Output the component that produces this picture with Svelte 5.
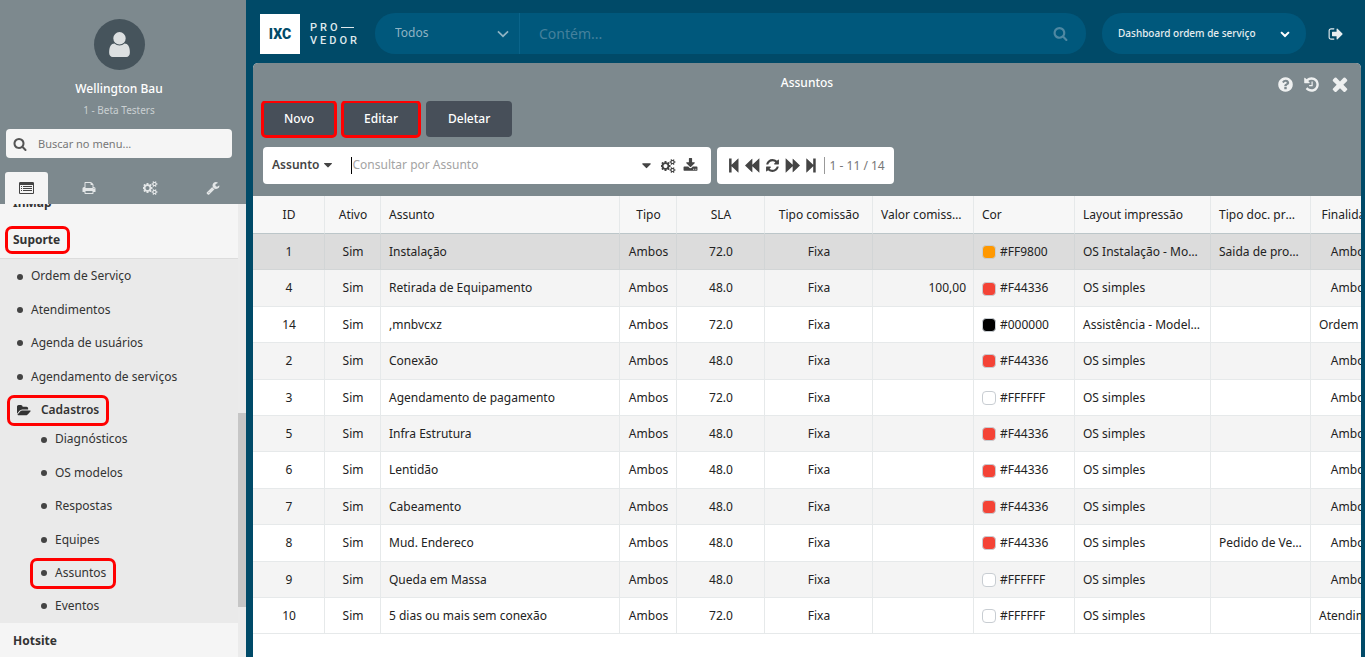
<script lang="ts">
  type Row = {
    id: number;
    assunto: string;
    sla: string;
    valor?: string;
    cor: string;
    layout: string;
    doc?: string;
    finalidade: string;
  };

  const icons: Record<string, { d: string; w?: number }> = {
    search: {
      d: 'M1216 832q0-185-131.5-316.5t-316.5-131.5-316.5 131.5-131.5 316.5 131.5 316.5 316.5 131.5 316.5-131.5 131.5-316.5zm512 832q0 52-38 90t-90 38q-54 0-90-38l-343-342q-179 124-399 124-143 0-273.5-55.5t-225-150-150-225-55.5-273.5 55.5-273.5 150-225 225-150 273.5-55.5 273.5 55.5 225 150 150 225 55.5 273.5q0 220-124 399l343 343q37 37 37 90z'
    },
    user: {
      d: 'M1536 1399q0 109-62.5 187t-150.5 78h-854q-88 0-150.5-78t-62.5-187q0-85 8.5-160.5t31.5-152 58.5-131 94-89 134.5-34.5q131 128 313 128t313-128q76 0 134.5 34.5t94 89 58.5 131 31.5 152 8.5 160.5zm-256-887q0 159-112.5 271.5t-271.5 112.5-271.5-112.5-112.5-271.5 112.5-271.5 271.5-112.5 271.5 112.5 112.5 271.5z'
    },
    list: {
      d: 'M160 128h1600q66 0 113 47t47 113v1216q0 66-47 113t-113 47h-1600q-66 0-113-47t-47-113v-1216q0-66 47-113t113-47zm-32 384v992q0 32 32 32h1600q32 0 32-32v-992zm128 128h128v128h-128zm256 0h1152v128h-1152zm-256 256h128v128h-128zm256 0h1152v128h-1152zm-256 256h128v128h-128zm256 0h1152v128h-1152z',
      w: 1920
    },
    print: {
      d: 'M448 1536h896v-256h-896v256zm0-640h896v-384h-160q-40 0-68-28t-28-68v-160h-640v640zm1152 64q0-26-19-45t-45-19-45 19-19 45 19 45 45 19 45-19 19-45zm128 0v416q0 13-9.5 22.5t-22.5 9.5h-224v160q0 40-28 68t-68 28h-960q-40 0-68-28t-28-68v-160h-224q-13 0-22.5-9.5t-9.5-22.5v-416q0-79 56.5-135.5t135.5-56.5h64v-544q0-40 28-68t68-28h672q40 0 88 20t76 48l152 152q28 28 48 76t20 88v256h64q79 0 135.5 56.5t56.5 135.5z'
    },
    cogs: {
      d: 'M832 896q0-106-75-181t-181-75-181 75-75 181 75 181 181 75 181-75 75-181zm768 512q0-52-38-90t-90-38-90 38-38 90q0 53 37.5 90.5t90.5 37.5 90.5-37.5 37.5-90.5zm0-1024q0-52-38-90t-90-38-90 38-38 90q0 53 37.5 90.5t90.5 37.5 90.5-37.5 37.5-90.5zm-384 421v185q0 10-7 19.5t-16 10.5l-155 24q-11 35-32 76 34 48 90 115 7 11 7 20 0 12-7 19-23 30-82.5 89.5t-78.5 59.5q-11 0-21-7l-115-90q-37 19-77 31-11 108-23 155-7 24-30 24h-186q-11 0-20-7.5t-10-17.5l-23-153q-34-10-75-31l-118 89q-7 7-20 7-11 0-21-8-144-133-144-160 0-9 7-19 10-14 41-53t47-61q-23-44-35-82l-152-24q-10-1-17-9.5t-7-19.5v-185q0-10 7-19.5t16-10.5l155-24q11-35 32-76-34-48-90-115-7-11-7-20 0-12 7-20 22-30 82-89t79-59q11 0 21 7l115 90q34-18 77-32 11-108 23-154 7-24 30-24h186q11 0 20 7.5t10 17.5l23 153q34 10 75 31l118-89q8-7 20-7 11 0 21 8 144 133 144 160 0 8-7 19-12 16-42 54t-45 60q23 48 34 82l152 23q10 2 17 10.5t7 19.5zm640 533v140q0 16-149 31-12 27-30 52 51 113 51 138 0 4-4 7-122 71-124 71-8 0-46-47t-52-68q-20 2-30 2t-30-2q-14 21-52 68t-46 47q-2 0-124-71-4-3-4-7 0-25 51-138-18-25-30-52-149-15-149-31v-140q0-16 149-31 13-29 30-52-51-113-51-138 0-4 4-7 4-2 35-20t59-34 30-16q8 0 46 46.5t52 67.5q20-2 30-2t30 2q51-71 92-112l6-2q4 0 124 70 4 3 4 7 0 25-51 138 17 23 30 52 149 15 149 31zm0-1024v140q0 16-149 31-12 27-30 52 51 113 51 138 0 4-4 7-122 71-124 71-8 0-46-47t-52-68q-20 2-30 2t-30-2q-14 21-52 68t-46 47q-2 0-124-71-4-3-4-7 0-25 51-138-18-25-30-52-149-15-149-31v-140q0-16 149-31 13-29 30-52-51-113-51-138 0-4 4-7 4-2 35-20t59-34 30-16q8 0 46 46.5t52 67.5q20-2 30-2t30 2q51-71 92-112l6-2q4 0 124 70 4 3 4 7 0 25-51 138 17 23 30 52 149 15 149 31z',
      w: 1920
    },
    wrench: {
      d: 'M448 1472q0-26-19-45t-45-19-45 19-19 45 19 45 45 19 45-19 19-45zm644-420l-682 682q-37 37-90 37-52 0-91-37l-106-108q-38-36-38-90 0-53 38-91l681-681q39 98 114.5 173.5t173.5 114.5zm634-435q0 39-23 106-47 134-164.5 217.5t-258.5 83.5q-185 0-316.5-131.5t-131.5-316.5 131.5-316.5 316.5-131.5q58 0 121.5 16.5t107.5 46.5q16 11 16 28t-16 28l-293 169v224l193 107q5-3 79-48.5t135.5-81 70.5-35.5q15 0 23.5 10t8.5 25z'
    },
    folder: {
      d: 'M1879 952q0 31-31 66l-336 396q-43 51-120.5 86.5t-143.5 35.5h-1088q-34 0-60.5-13t-26.5-43q0-31 31-66l336-396q43-51 120.5-86.5t143.5-35.5h1088q34 0 60.5 13t26.5 43zm-343-344v160h-832q-94 0-197 47.5t-164 119.5l-337 396-5 6q0-4-.5-12.5t-.5-12.5v-960q0-92 66-158t158-66h320q92 0 158 66t66 158v32h544q92 0 158 66t66 158z',
      w: 1920
    },
    signOut: {
      d: 'M704 1440q0 4 1 20t.5 26.5-3 23.5-10 19.5-20.5 6.5h-320q-119 0-203.5-84.5t-84.5-203.5v-704q0-119 84.5-203.5t203.5-84.5h320q13 0 22.5 9.5t9.5 22.5q0 4 1 20t.5 26.5-3 23.5-10 19.5-20.5 6.5h-320q-66 0-113 47t-47 113v704q0 66 47 113t113 47h312l11.5 1 11.5 3 8 5.5 7 9 2 13.5zm928-544q0 26-19 45l-544 544q-19 19-45 19t-45-19-19-45v-288h-448q-26 0-45-19t-19-45v-384q0-26 19-45t45-19h448v-288q0-26 19-45t45-19 45 19l544 544q19 19 19 45z'
    },
    help: {
      d: 'M1024 1376v-192q0-14-9-23t-23-9h-192q-14 0-23 9t-9 23v192q0 14 9 23t23 9h192q14 0 23-9t9-23zm256-672q0-88-55.5-163t-138.5-116-170-41q-243 0-371 213-15 24 8 42l132 100q7 6 19 6 16 0 25-12 53-68 86-92 34-24 86-24 48 0 85.5 26t37.5 59q0 38-20 61t-68 45q-63 28-115.5 86.5t-52.5 125.5v36q0 14 9 23t23 9h192q14 0 23-9t9-23q0-19 21.5-49.5t54.5-49.5q32-18 49-28.5t46-35 44.5-48 28-60.5 12.5-81zm384 192q0 209-103 385.5t-279.5 279.5-385.5 103-385.5-103-279.5-279.5-103-385.5 103-385.5 279.5-279.5 385.5-103 385.5 103 279.5 279.5 103 385.5z'
    },
    history: {
      d: 'M1664 896q0 156-61 298t-164 245-245 164-298 61q-172 0-327-72.5t-264-204.5q-7-10-6.5-22.5t8.5-20.5l137-138q10-9 25-9 16 2 23 12 73 95 179 147t225 52q104 0 198.5-40.5t163.5-109.5 109.5-163.5 40.5-198.5-40.5-198.5-109.5-163.5-163.5-109.5-198.5-40.5q-98 0-188 35.5t-160 101.5l137 138q31 30 14 69-17 40-59 40h-448q-26 0-45-19t-19-45v-448q0-42 40-59 39-17 69 14l130 129q107-101 244.5-156.5t284.5-55.5q156 0 298 61t245 164 164 245 61 298zm-640-288v448q0 14-9 23t-23 9h-320q-14 0-23-9t-9-23v-64q0-14 9-23t23-9h224v-352q0-14 9-23t23-9h64q14 0 23 9t9 23z'
    },
    close: {
      d: 'M1490 1322q0 40-28 68l-136 136q-28 28-68 28t-68-28l-294-294-294 294q-28 28-68 28t-68-28l-136-136q-28-28-28-68t28-68l294-294-294-294q-28-28-28-68t28-68l136-136q28-28 68-28t68 28l294 294 294-294q28-28 68-28t68 28l136 136q28 28 28 68t-28 68l-294 294 294 294q28 28 28 68z'
    },
    download: {
      d: 'M1344 1344q0-26-19-45t-45-19-45 19-19 45 19 45 45 19 45-19 19-45zm256 0q0-26-19-45t-45-19-45 19-19 45 19 45 45 19 45-19 19-45zm128-224v320q0 40-28 68t-68 28h-1472q-40 0-68-28t-28-68v-320q0-40 28-68t68-28h465l135 136q58 56 136 56t136-56l136-136h464q40 0 68 28t28 68zm-325-569q17 41-14 70l-448 448q-18 19-45 19t-45-19l-448-448q-31-29-14-70 17-39 59-39h256v-448q0-26 19-45t45-19h256q26 0 45 19t19 45v448h256q42 0 59 39z'
    },
    caret: { d: 'M1408 704q0 26-19 45l-448 448q-19 19-45 19t-45-19l-448-448q-19-19-19-45t19-45 45-19h896q26 0 45 19t19 45z' },
    angle: { d: 'M896 1400l-840-800 170-185 670 645 670-645 170 185z' },
    chevron: { d: 'M1683 728l-742 742q-19 19-45 19t-45-19l-742-742q-19-19-19-45.5t19-45.5l166-165q19-19 45-19t45 19l531 531 531-531q19-19 45-19t45 19l166 165q19 19 19 45.5t-19 45.5z' },
    first: { d: 'M128 64h300v740l788-730q38-36 38 26v1592q0 62-38 26l-788-730v740h-300z', w: 1408 },
    last: { d: 'M1280 64h-300v740l-788-730q-38-36-38 26v1592q0 62 38 26l788-730v740h300z', w: 1408 },
    prev: { d: 'M0 896l840-800q38-36 38 26v690l802-756q38-36 38 26v1628q0 62-38 26l-802-756v690q0 62-38 26z' },
    next: { d: 'M1792 896l-840-800q-38-36-38 26v690l-802-756q-38-36-38 26v1628q0 62 38 26l802-756v690q0 62 38 26z' },
    refresh: {
      d: 'M1639 1056q0 5-1 7-64 268-268 434.5t-478 166.5q-146 0-282.5-55t-243.5-157l-129 129q-19 19-45 19t-45-19-19-45v-448q0-26 19-45t45-19h448q26 0 45 19t19 45-19 45l-137 137q71 66 161 102t187 36q134 0 250-65t186-179q11-17 53-117 8-23 30-23h192q13 0 22.5 9.5t9.5 22.5zm25-800v448q0 26-19 45t-45 19h-448q-26 0-45-19t-19-45 19-45l138-138q-148-137-349-137-134 0-250 65t-186 179q-11 17-53 117-8 23-30 23h-199q-13 0-22.5-9.5t-9.5-22.5v-7q65-268 270-434.5t480-166.5q146 0 284 55.5t245 156.5l130-129q19-19 45-19t45 19 19 45z'
    }
  };

  const tabs = [
    { icon: 'list', label: 'Menu' },
    { icon: 'print', label: 'Relatórios' },
    { icon: 'cogs', label: 'Configurações' },
    { icon: 'wrench', label: 'Ferramentas' }
  ];
  const suporte = ['Ordem de Serviço', 'Atendimentos', 'Agenda de usuários', 'Agendamento de serviços'];
  const cadastros = ['Diagnósticos', 'OS modelos', 'Respostas', 'Equipes', 'Assuntos', 'Eventos'];

  const actions = ['Novo', 'Editar', 'Deletar'];
  const pager = [
    { icon: 'first', label: 'Primeira página' },
    { icon: 'prev', label: 'Página anterior' },
    { icon: 'refresh', label: 'Atualizar' },
    { icon: 'next', label: 'Próxima página' },
    { icon: 'last', label: 'Última página' }
  ];

  const rows: Row[] = [
    { id: 1, assunto: 'Instalação', sla: '72.0', cor: '#FF9800', layout: 'OS Instalação - Modelo 1', doc: 'Saida de produtos', finalidade: 'Ambos' },
    { id: 4, assunto: 'Retirada de Equipamento', sla: '48.0', valor: '100,00', cor: '#F44336', layout: 'OS simples', finalidade: 'Ambos' },
    { id: 14, assunto: ',mnbvcxz', sla: '72.0', cor: '#000000', layout: 'Assistência - Modelo 1', finalidade: 'Ordem de serviço' },
    { id: 2, assunto: 'Conexão', sla: '48.0', cor: '#F44336', layout: 'OS simples', finalidade: 'Ambos' },
    { id: 3, assunto: 'Agendamento de pagamento', sla: '72.0', cor: '#FFFFFF', layout: 'OS simples', finalidade: 'Ambos' },
    { id: 5, assunto: 'Infra Estrutura', sla: '48.0', cor: '#F44336', layout: 'OS simples', finalidade: 'Ambos' },
    { id: 6, assunto: 'Lentidão', sla: '48.0', cor: '#F44336', layout: 'OS simples', finalidade: 'Ambos' },
    { id: 7, assunto: 'Cabeamento', sla: '48.0', cor: '#F44336', layout: 'OS simples', finalidade: 'Ambos' },
    { id: 8, assunto: 'Mud. Endereco', sla: '48.0', cor: '#F44336', layout: 'OS simples', doc: 'Pedido de Venda', finalidade: 'Ambos' },
    { id: 9, assunto: 'Queda em Massa', sla: '48.0', cor: '#FFFFFF', layout: 'OS simples', finalidade: 'Ambos' },
    { id: 10, assunto: '5 dias ou mais sem conexão', sla: '72.0', cor: '#FFFFFF', layout: 'OS simples', finalidade: 'Atendimento' }
  ];

  let tab = $state('list');
  let selected = $state(1);
</script>

{#snippet icon(name: string, size = 14)}
  <svg class="icon" viewBox="0 0 {icons[name].w ?? 1792} 1792" height={size} aria-hidden="true">
    <path d={icons[name].d} fill-rule={name === 'list' ? 'evenodd' : 'nonzero'} />
  </svg>
{/snippet}

<div class="app">
  <aside class="sidebar">
    <header class="profile">
      <div class="avatar">{@render icon('user', 29)}</div>
      <div class="name">Wellington Bau</div>
      <div class="branch">1 - Beta Testers</div>
      <label class="menu-search">
        {@render icon('search')}
        <input type="text" placeholder="Buscar no menu..." aria-label="Buscar no menu" />
      </label>
      <div class="tabs">
        {#each tabs as t}
          <button type="button" class:active={tab === t.icon} aria-label={t.label} onclick={() => (tab = t.icon)}>
            {@render icon(t.icon)}
          </button>
        {/each}
      </div>
    </header>

    <div class="scroll">
      <nav>
        <a href="#inmap" class="section cut">InMap</a>
        <a href="#suporte" class="section open"><span class="marked">Suporte</span></a>
        <ul>
          {#each suporte as item}
            <li><a href="#suporte"><i></i>{item}</a></li>
          {/each}
          <li class="group">
            <a href="#cadastros" class="marked">{@render icon('folder', 13)}Cadastros</a>
            <ul>
              {#each cadastros as item}
                <li><a href="#cadastros" class:marked={item === 'Assuntos'}><i></i>{item}</a></li>
              {/each}
            </ul>
          </li>
        </ul>
        <a href="#hotsite" class="section">Hotsite</a>
      </nav>
      <div class="track"><div class="thumb"></div></div>
    </div>
  </aside>

  <div class="content">
    <header class="topbar">
      <a href="#home" class="logo">
        <span class="mark">IXC</span>
        <span class="wordmark">PRO<span class="dash"></span><br />VEDOR</span>
      </a>
      <div class="global-search">
        <div class="picker scope">
          <select aria-label="Módulo"><option>Todos</option></select>
          {@render icon('angle', 12)}
        </div>
        <input type="text" placeholder="Contém..." aria-label="Contém" />
        <button type="button" aria-label="Pesquisar">{@render icon('search', 15)}</button>
      </div>
      <div class="picker dashboard">
        <select aria-label="Dashboard"><option>Dashboard ordem de serviço</option></select>
        {@render icon('chevron', 10)}
      </div>
      <button type="button" class="logout" aria-label="Sair">{@render icon('signOut', 16)}</button>
    </header>

    <main class="panel">
      <div class="titlebar">
        <h1>Assuntos</h1>
        <div class="window-tools">
          <button type="button" aria-label="Ajuda">{@render icon('help', 17)}</button>
          <button type="button" aria-label="Histórico">{@render icon('history', 17)}</button>
          <button type="button" aria-label="Fechar">{@render icon('close', 22)}</button>
        </div>
      </div>

      <div class="actions">
        {#each actions as action}
          <button type="button" class:highlight={action !== 'Deletar'}>{action}</button>
        {/each}
      </div>

      <div class="filters">
        <div class="filter">
          <button type="button" class="field">Assunto {@render icon('caret')}</button>
          <span class="cursor"></span>
          <input type="text" placeholder="Consultar por Assunto" aria-label="Consultar por Assunto" />
          <button type="button" aria-label="Opções">{@render icon('caret', 15)}</button>
          <button type="button" aria-label="Configurar">{@render icon('cogs')}</button>
          <button type="button" aria-label="Exportar">{@render icon('download', 15)}</button>
        </div>
        <div class="pager">
          {#each pager as p}
            <button type="button" aria-label={p.label}>{@render icon(p.icon, 15)}</button>
          {/each}
          <span class="count">1 - 11 / 14</span>
        </div>
      </div>

      <div class="grid">
        <table>
          <colgroup>
            <col class="w-id" />
            <col class="w-ativo" />
            <col />
            <col class="w-tipo" />
            <col class="w-sla" />
            <col class="w-comissao" />
            <col class="w-valor" />
            <col class="w-valor" />
            <col class="w-layout" />
            <col class="w-doc" />
            <col class="w-finalidade" />
          </colgroup>
          <thead>
            <tr>
              <th class="center">ID</th>
              <th class="center">Ativo</th>
              <th>Assunto</th>
              <th class="center">Tipo</th>
              <th class="center">SLA</th>
              <th class="center">Tipo comissão</th>
              <th>Valor comissão</th>
              <th>Cor</th>
              <th>Layout impressão</th>
              <th>Tipo doc. produto</th>
              <th class="center">Finalidade</th>
            </tr>
          </thead>
          <tbody>
            {#each rows as row (row.id)}
              <tr class:selected={row.id === selected} onclick={() => (selected = row.id)}>
                <td class="center">{row.id}</td>
                <td class="center">Sim</td>
                <td>{row.assunto}</td>
                <td class="center">Ambos</td>
                <td class="center">{row.sla}</td>
                <td class="center">Fixa</td>
                <td class="right">{row.valor ?? ''}</td>
                <td>
                  <div class="color"><span class="swatch" style="background: {row.cor}"></span>{row.cor}</div>
                </td>
                <td>{row.layout}</td>
                <td>{row.doc ?? ''}</td>
                <td class="center">{row.finalidade}</td>
              </tr>
            {/each}
          </tbody>
        </table>
      </div>
    </main>
  </div>
</div>

<style>
  :global(body) {
    margin: 0;
  }

  .app {
    display: flex;
    height: 100vh;
    overflow: hidden;
    background: #004a68;
    color: #333;
    font-family: 'Noto Sans', 'Open Sans', sans-serif;
    font-size: 12px;
    line-height: 1.7;
  }

  .app * {
    box-sizing: border-box;
  }

  button,
  input,
  select {
    padding: 0;
    border: 0;
    background: none;
    color: inherit;
    font: inherit;
    outline: none;
  }

  button {
    display: flex;
    align-items: center;
    justify-content: center;
    cursor: pointer;
  }

  input {
    flex: 1;
    min-width: 0;
  }

  a {
    color: inherit;
    text-decoration: none;
  }

  ul {
    margin: 0;
    padding: 0;
    list-style: none;
  }

  .icon {
    display: block;
    flex: none;
    fill: currentColor;
  }

  /* sidebar */
  .sidebar {
    display: flex;
    flex: none;
    flex-direction: column;
    width: 246px;
    background: #f5f5f5;
  }

  .profile {
    display: flex;
    flex-direction: column;
    align-items: center;
    padding: 19px 8px 0 0;
    background: #7d898e;
    color: #fff;
  }

  .avatar {
    display: flex;
    align-items: center;
    justify-content: center;
    width: 51px;
    height: 51px;
    border-radius: 50%;
    background: #46545c;
    color: #dce0e1;
  }

  .name {
    margin-top: 9px;
    font-weight: 500;
  }

  .branch {
    margin-top: 2px;
    color: #cad0d2;
    font-size: 10px;
    line-height: 18px;
  }

  .menu-search {
    display: flex;
    gap: 11px;
    align-items: center;
    align-self: stretch;
    height: 29px;
    margin: 10px 6px 0;
    padding: 0 7px;
    border-radius: 4px;
    background: #f5f5f5;
    color: #555;
    font-size: 11px;
  }

  .menu-search input::placeholder {
    color: #777;
  }

  .tabs {
    display: flex;
    gap: 19px;
    align-self: stretch;
    margin: 14px 0 0 5px;
    color: #e3e6e7;
  }

  .tabs button {
    width: 43px;
    height: 32px;
    border-radius: 3px 3px 0 0;
  }

  .tabs .active {
    background: #f5f5f5;
    color: #444;
  }

  .scroll {
    display: flex;
    flex: 1;
    min-height: 0;
  }

  nav {
    flex: 1;
    overflow: hidden;
  }

  .section {
    display: block;
    height: 37px;
    padding: 8px 13px;
    color: #333;
    font-weight: 700;
  }

  .section.cut {
    margin-top: -19px;
  }

  .section.open {
    border-bottom: 1px solid #dcdcdc;
  }

  nav ul {
    background: #eaeaea;
  }

  li {
    padding: 7px 14px 6px;
  }

  li a {
    display: inline-flex;
    align-items: center;
    vertical-align: top;
  }

  li i {
    width: 6px;
    height: 6px;
    margin: 0 8px 0 3px;
    border-radius: 50%;
    background: #444;
  }

  .group {
    padding: 7px 0 0;
  }

  .group > a {
    gap: 10px;
    margin-left: 15px;
    padding-left: 2px;
    font-weight: 600;
  }

  .group > ul {
    margin-top: 2px;
  }

  .group li {
    padding-left: 38px;
  }

  .marked {
    position: relative;
  }

  .marked::after {
    position: absolute;
    inset: -5px -10px -6px -8px;
    border: 3px solid #f00;
    border-radius: 7px;
    content: '';
  }

  .track {
    position: relative;
    width: 8px;
    background: #ebebeb;
  }

  .thumb {
    position: absolute;
    top: 46%;
    right: 0;
    left: 0;
    height: 43%;
    background: #c6c6c6;
  }

  /* top bar */
  .content {
    display: flex;
    flex: 1;
    flex-direction: column;
    min-width: 0;
  }

  .topbar {
    display: flex;
    align-items: center;
    height: 63px;
    padding: 4px 21px 0 14px;
    color: #e6edf0;
  }

  .logo {
    display: flex;
    gap: 10px;
    align-items: center;
    width: 115px;
    color: #dfe9ed;
    font-family: Roboto, sans-serif;
    font-size: 11px;
    font-weight: 500;
  }

  .mark {
    width: 40px;
    background: #fff;
    color: #004a68;
    font-size: 14px;
    font-weight: 900;
    line-height: 40px;
    text-align: center;
  }

  .wordmark {
    line-height: 13px;
    letter-spacing: 3px;
  }

  .dash {
    display: inline-block;
    width: 13px;
    height: 1px;
    background: currentColor;
    vertical-align: middle;
  }

  .global-search {
    display: flex;
    flex: 1;
    align-items: center;
    height: 41px;
    margin-right: 16px;
    padding-right: 18px;
    border-radius: 20px;
    background: #00587c;
    color: #6f9fb4;
  }

  .global-search input {
    align-self: stretch;
    padding-left: 19px;
    font-size: 14px;
  }

  .global-search input::placeholder {
    color: #45819c;
  }

  .global-search > button {
    color: #4e88a2;
  }

  .picker {
    position: relative;
    display: flex;
    align-items: center;
  }

  .picker select {
    flex: 1;
    width: 100%;
    height: 41px;
    padding-left: 20px;
    appearance: none;
  }

  .picker .icon {
    position: absolute;
    right: 10px;
    pointer-events: none;
  }

  .scope {
    width: 145px;
    border-right: 1px solid #0a648a;
    color: #8fb3c3;
  }

  .dashboard {
    width: 204px;
    border-radius: 20px;
    background: #00587c;
    font-size: 10px;
    font-weight: 500;
  }

  .dashboard select {
    padding-left: 16px;
  }

  .dashboard .icon {
    right: 16px;
    color: #fff;
  }

  .logout {
    margin-left: 22px;
  }

  /* window */
  .panel {
    flex: 1;
    min-height: 0;
    margin: 0 4px 0 7px;
    overflow: hidden;
    border-radius: 5px 5px 0 0;
    background: #fff;
  }

  .titlebar {
    display: flex;
    align-items: center;
    justify-content: center;
    position: relative;
    height: 38px;
    padding-top: 2px;
    background: #7d898e;
    color: #fff;
  }

  h1 {
    margin: 0;
    font-size: 12px;
    font-weight: 500;
  }

  .window-tools {
    position: absolute;
    right: 10px;
    display: flex;
    gap: 9px;
    align-items: center;
    padding-top: 2px;
    color: #eef0f0;
  }

  .actions {
    display: flex;
    gap: 6px;
    padding: 0 9px;
    background: #7d898e;
  }

  .actions button {
    height: 36px;
    padding: 0 22px;
    border-radius: 4px;
    background: #474f59;
    color: #fff;
    font-weight: 500;
  }

  .actions .highlight {
    outline: 3px solid #f00;
    outline-offset: -2px;
  }

  .filters {
    display: flex;
    gap: 6px;
    padding: 10px 10px 12px;
    background: #7d898e;
    color: #444;
  }

  .filter,
  .pager {
    display: flex;
    align-items: center;
    height: 37px;
    border-radius: 4px;
    background: #fff;
  }

  .filter {
    flex: 0 1 448px;
    gap: 7px;
    padding: 0 13px 0 9px;
  }

  .field {
    gap: 2px;
    margin-right: 9px;
    font-weight: 600;
  }

  .cursor {
    width: 1px;
    height: 17px;
    margin-right: -7px;
    background: #000;
  }

  .filter input::placeholder {
    color: #a3a3a3;
  }

  .pager {
    gap: 5px;
    padding: 0 9px 0 11px;
  }

  .count {
    margin-left: 2px;
    padding-left: 5px;
    border-left: 1px solid #999;
    color: #777;
    line-height: 17px;
  }

  .grid {
    overflow: hidden;
  }

  table {
    width: 100%;
    min-width: 1137px;
    border-collapse: separate;
    border-spacing: 0;
    table-layout: fixed;
    color: #222;
  }

  .w-id {
    width: 72px;
  }

  .w-ativo {
    width: 56px;
  }

  .w-tipo {
    width: 57px;
  }

  .w-sla {
    width: 88px;
  }

  .w-comissao {
    width: 108px;
  }

  .w-valor {
    width: 101px;
  }

  .w-layout {
    width: 136px;
  }

  .w-doc {
    width: 100px;
  }

  .w-finalidade {
    width: 79px;
  }

  th,
  td {
    overflow: hidden;
    padding: 8px 7px 7px 8px;
    border-right: 1px solid #e6e9ea;
    border-bottom: 1px solid #e6e9ea;
    font-weight: 400;
    text-align: left;
    text-overflow: ellipsis;
    white-space: nowrap;
  }

  th {
    height: 38px;
    padding-right: 10px;
    border-bottom: 1px solid #bcc6c9;
    background: #f7f7f7;
  }

  tbody tr:nth-child(even) {
    background: #f4f4f4;
  }

  tbody tr.selected {
    background: #dcdcdc;
  }

  .selected td {
    border-color: #d2d5d6;
  }

  .center {
    padding-right: 7px;
    text-align: center;
  }

  .right {
    text-align: right;
  }

  .color {
    display: flex;
    gap: 4px;
    align-items: center;
  }

  .swatch {
    width: 14px;
    height: 14px;
    border: 1px solid #c8cdd2;
    border-radius: 4px;
  }
</style>
